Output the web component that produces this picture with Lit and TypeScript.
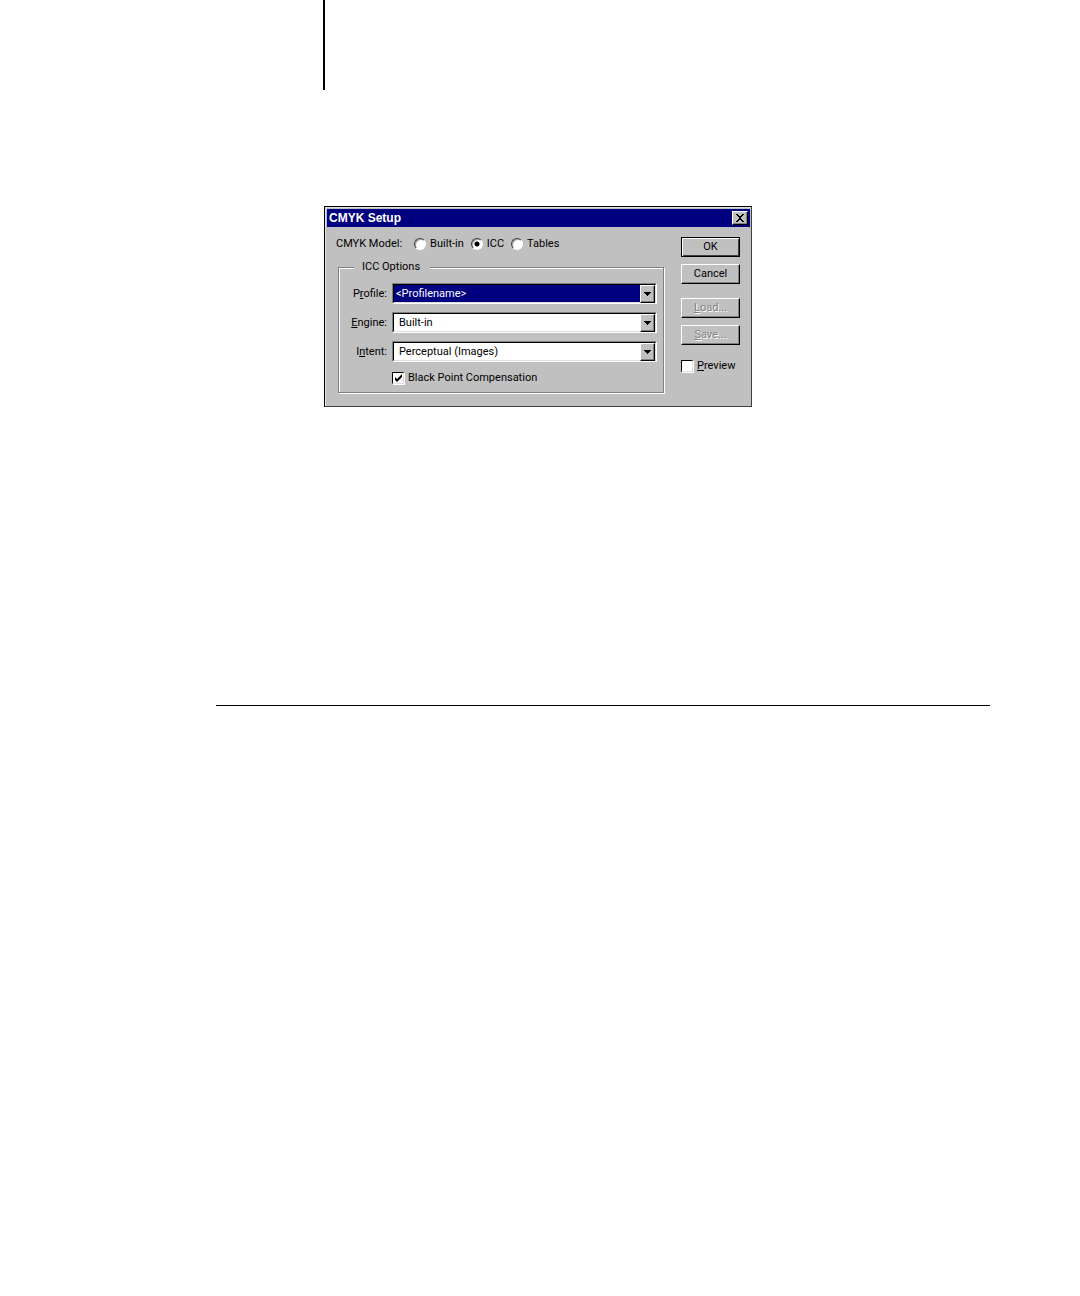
import { LitElement, html, css, svg } from "lit";
import { customElement, property } from "lit/decorators.js";

const arrowGlyph = svg`<path d="M3 6h7v1h-1v1h-1v1h-1v1h-1v-1h-1v-1h-1v-1h-1z" fill="#000" />`;

@customElement("cmyk-setup-dialog")
export class CmykSetupDialog extends LitElement {
  @property() profile = "<Profilename>";

  static styles = css`
    :host {
      display: block;
      font: 11px/16px Roboto, "Liberation Sans", sans-serif;
      color: #000;
    }
    * {
      box-sizing: border-box;
    }
    button,
    select,
    input {
      font: inherit;
      color: inherit;
      margin: 0;
      appearance: none;
      border-radius: 0;
      outline: none;
    }
    .dialog {
      background: #c0c0c0;
      border: 1px solid #000;
      border-right-color: #404040;
      border-bottom-color: #404040;
      box-shadow: inset 1px 1px 0 #e0e0e0;
      padding: 2px 1px 13px 2px;
    }
    .title-bar {
      display: flex;
      align-items: center;
      justify-content: space-between;
      height: 18px;
      padding: 0 2px;
      background: #000080;
      color: #fff;
    }
    .title {
      margin: 0;
      font: bold 12px/16px "Liberation Sans", Arial, sans-serif;
    }
    .close {
      display: block;
      width: 16px;
      height: 14px;
      padding: 0;
      background: #c0c0c0;
      border: 1px solid;
      border-color: #fff #000 #000 #fff;
      box-shadow: inset -1px -1px 0 #808080;
    }
    .close svg {
      display: block;
    }
    .body {
      display: flex;
      justify-content: space-between;
      gap: 17px;
      padding: 9px 10px 0 9px;
    }
    .settings {
      flex: 1;
      min-width: 0;
    }
    .model {
      display: flex;
      align-items: center;
      height: 16px;
    }
    .model-name {
      margin-right: 12px;
    }
    .choice {
      display: flex;
      align-items: center;
      gap: 4px;
      margin-right: 7px;
    }
    .radio {
      width: 12px;
      height: 12px;
      border: 1px solid;
      border-color: #404040 #fff #fff #404040;
      border-radius: 50%;
      background: #fff;
      box-shadow: inset 1px 1px 0 #a0a0a0;
    }
    .radio:checked {
      background: radial-gradient(circle, #000 2px, #fff 3px);
    }
    .options {
      min-width: 0;
      margin: 7px 0 0 2px;
      padding: 8px 6px 6px 7px;
      border: 1px solid #808080;
      box-shadow: 1px 1px 0 #fff, inset 1px 1px 0 #fff;
    }
    .options legend {
      margin-left: 8px;
      padding: 0 10px 0 8px;
      background: #c0c0c0;
    }
    .grid {
      display: grid;
      grid-template-columns: 41px 1fr;
      column-gap: 5px;
      row-gap: 8px;
      align-items: center;
    }
    .grid > label {
      text-align: right;
      white-space: nowrap;
    }
    .drop {
      display: grid;
      grid-template-columns: 1fr 16px;
      height: 21px;
      border: 1px solid;
      border-color: #808080 #fff #fff #808080;
    }
    .drop select {
      grid-area: 1 / 1 / 2 / 3;
      width: 100%;
      min-width: 0;
      padding: 0 16px 0 5px;
      background: #fff;
      border: 1px solid;
      border-color: #000 #dfdfdf #dfdfdf #000;
    }
    .drop .selected {
      padding-left: 2px;
      background: #000080;
      color: #fff;
    }
    .arrow {
      grid-area: 1 / 2 / 2 / 3;
      margin: 1px 1px 0 0;
      background: #c0c0c0;
      border: 1px solid;
      border-color: #fff #000 #000 #fff;
      box-shadow: inset -1px -1px 0 #808080;
      pointer-events: none;
      z-index: 1;
    }
    .arrow svg,
    .tick svg {
      display: block;
    }
    .check {
      display: flex;
      align-items: center;
      gap: 4px;
      white-space: nowrap;
    }
    .grid .check {
      grid-column: 2;
      text-align: left;
    }
    .tick {
      display: grid;
    }
    .tick > * {
      grid-area: 1 / 1;
    }
    .tick input {
      width: 12px;
      height: 12px;
      background: #fff;
      border: 1px solid;
      border-color: #000 #dfdfdf #dfdfdf #000;
      box-shadow: 1px 1px 0 #fff;
    }
    .tick svg {
      pointer-events: none;
      visibility: hidden;
    }
    .tick input:checked + svg {
      visibility: visible;
    }
    .actions {
      display: flex;
      flex-direction: column;
      gap: 7px;
      width: 59px;
      padding-top: 1px;
    }
    .push {
      height: 20px;
      padding: 0;
      background: #c0c0c0;
      border: 1px solid;
      border-color: #fff #000 #000 #fff;
      box-shadow: inset -1px -1px 0 #808080;
    }
    .default {
      border-color: #000;
      box-shadow: inset 1px 1px 0 #fff, inset -1px -1px 0 #404040;
    }
    .push:disabled {
      color: #808080;
      text-shadow: 1px 1px 0 #fff;
    }
    .files {
      display: flex;
      flex-direction: column;
      gap: 7px;
      padding: 7px 0 6px;
    }
    u {
      text-decoration-thickness: 1px;
      text-underline-offset: 1px;
    }
  `;

  private drop(id: string, label: unknown, value: string, selected = false) {
    return html`
      <label for=${id}>${label}</label>
      <div class="drop">
        <select id=${id} class=${selected ? "selected" : ""}>
          <option>${value}</option>
        </select>
        <span class="arrow">
          <svg width="13" height="15" viewBox="0 0 13 15" aria-hidden="true">${arrowGlyph}</svg>
        </span>
      </div>
    `;
  }

  private radio(label: string, checked = false) {
    return html`<label class="choice"
      ><input class="radio" type="radio" name="model" .checked=${checked} />${label}</label
    >`;
  }

  private check(label: unknown, checked = false) {
    return html`<label class="check"
      ><span class="tick"
        ><input type="checkbox" .checked=${checked} /><svg
          width="12"
          height="12"
          viewBox="0 0 12 12"
          aria-hidden="true"
        >
          <path d="M3 5v3l2 2 5-5V2L5 7z" fill="#000" /></svg></span
      ><span>${label}</span></label
    >`;
  }

  render() {
    return html`
      <section class="dialog" role="dialog" aria-labelledby="title">
        <header class="title-bar">
          <h1 class="title" id="title">CMYK Setup</h1>
          <button class="close" aria-label="Close">
            <svg width="14" height="12" viewBox="0 0 14 12" aria-hidden="true">
              <path
                d="M3 2h2v1h1v1h2v-1h1v-1h2v1h-1v1h-1v1h-1v2h1v1h1v1h1v1h-2v-1h-1v-1h-2v1h-1v1h-2v-1h1v-1h1v-1h1v-2h-1v-1h-1v-1h-1z"
                fill="#000"
              />
            </svg>
          </button>
        </header>
        <form class="body" @submit=${(e: Event) => e.preventDefault()}>
          <div class="settings">
            <div class="model" role="radiogroup" aria-labelledby="model">
              <span class="model-name" id="model">CMYK Model:</span>
              ${this.radio("Built-in")} ${this.radio("ICC", true)} ${this.radio("Tables")}
            </div>
            <fieldset class="options">
              <legend>ICC Options</legend>
              <div class="grid">
                ${this.drop("profile", html`P<u>r</u>ofile:`, this.profile, true)}
                ${this.drop("engine", html`<u>E</u>ngine:`, "Built-in")}
                ${this.drop("intent", html`I<u>n</u>tent:`, "Perceptual (Images)")}
                ${this.check("Black Point Compensation", true)}
              </div>
            </fieldset>
          </div>
          <div class="actions">
            <button class="push default">OK</button>
            <button class="push" type="button">Cancel</button>
            <div class="files">
              <button class="push" type="button" disabled><u>L</u>oad...</button>
              <button class="push" type="button" disabled><u>S</u>ave...</button>
            </div>
            ${this.check(html`<u>P</u>review`)}
          </div>
        </form>
      </section>
    `;
  }
}

@customElement("app-root")
export class AppRoot extends LitElement {
  static styles = css`
    :host {
      display: block;
      min-height: 100vh;
      background: #fff;
    }
    .margin-rule {
      height: 90px;
      margin-left: calc(30% - 1px);
      border-left: 2px solid #000;
    }
    .figure {
      max-width: 428px;
      margin: 116px 0 0 30%;
    }
    .section-rule {
      height: 1px;
      margin: 298px 90px 0 20%;
      border: 0;
      background: #000;
    }
  `;

  render() {
    return html`
      <div class="margin-rule"></div>
      <main>
        <cmyk-setup-dialog class="figure"></cmyk-setup-dialog>
        <hr class="section-rule" />
      </main>
    `;
  }
}
